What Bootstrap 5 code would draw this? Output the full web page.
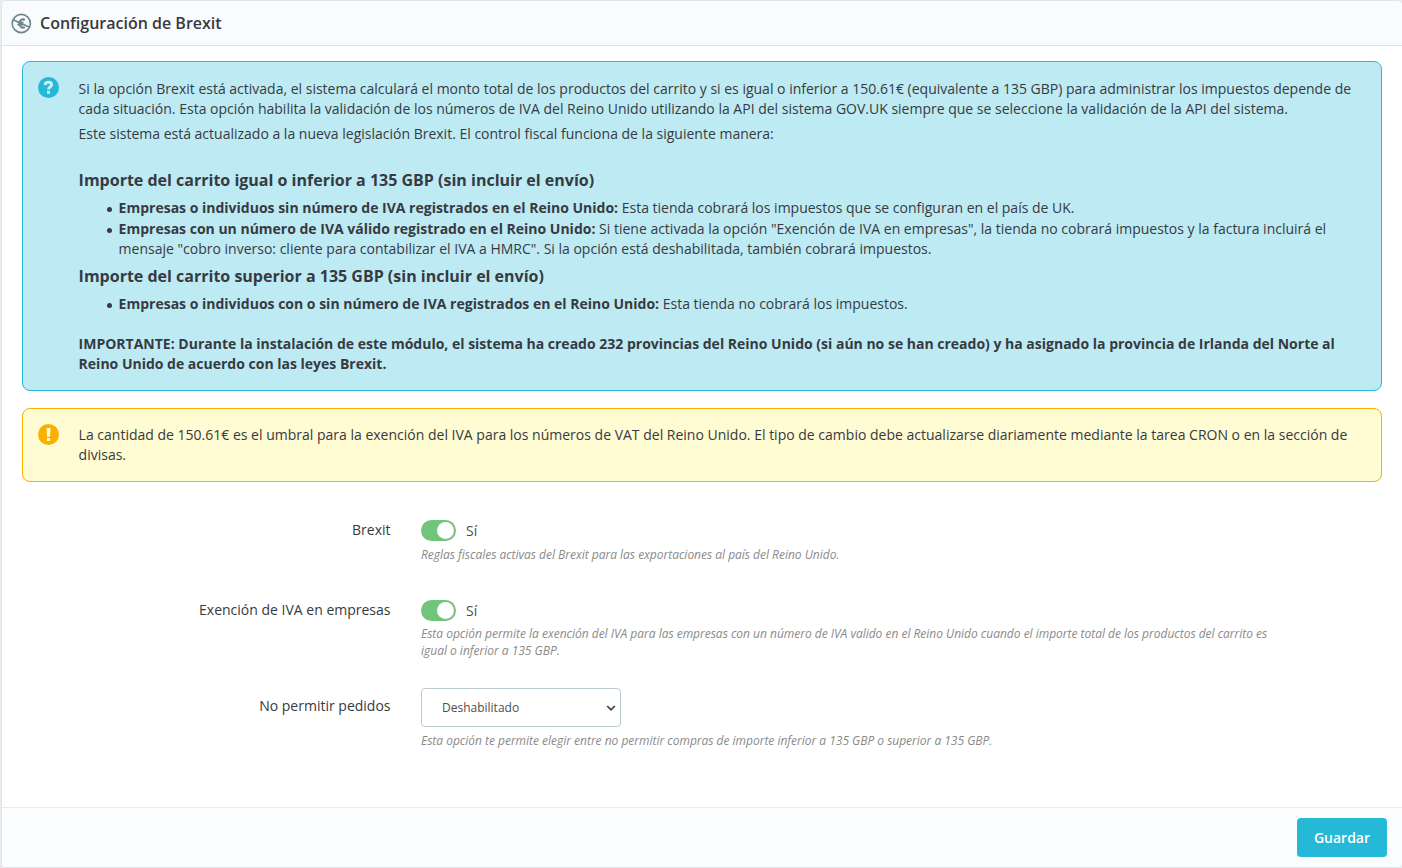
<!DOCTYPE html>
<html lang="es">
<head>
<meta charset="utf-8">
<meta name="viewport" content="width=device-width, initial-scale=1">
<title>Configuración de Brexit</title>
<link href="https://cdn.jsdelivr.net/npm/bootstrap@5.3.0/dist/css/bootstrap.min.css" rel="stylesheet">
<style>
  html, body { height: 100%; }
  body { background: #e9edf0; font-family: "Open Sans", sans-serif; font-size: 14px; line-height: 20px; color: #363a41; overflow: hidden; }
  .panel { height: 868px; margin-left: 1px; border: 1px solid #dbe6e9; border-right: 0; border-radius: 5px; --bs-card-inner-border-radius: 4px; }
  .panel .card-header { height: 45px; padding: 0 9px; background: #fafbfc; border-bottom: 1px solid #dbe6e9; font-size: 16px; font-weight: 600; }
  .panel .card-body { padding: 15px 20px 0; }
  .panel .card-footer { height: 60px; padding: 10px 15px; background: #fcfdfe; border-top: 1px solid #eaebec; }
  .notice { padding: 17px 28px 0 15px; border-radius: 8px; margin: 0; width: 1360px; color: #363a41; }
  .notice svg { margin-top: -2px; margin-right: 19.6px; }
  .notice-info { height: 330px; background: #beeaf3; border-color: #25b9d7; }
  .notice-warn { height: 74px; margin-top: 17px; padding-top: 16px; background: #fffbd3; border-color: #fab000; }
  .notice-warn svg { margin-top: -1px; }
  .notice-warn p { letter-spacing: .003px; }
  .notice p { margin-bottom: 5px; }
  .notice h4 { font-size: 16px; line-height: 22px; font-weight: 700; margin: 0; }
  .notice ul { padding-left: 40px; margin: 7px 0 0; list-style: none; }
  .notice li { position: relative; }
  .notice li + li { margin-top: 1px; }
  .notice li::before { content: ""; position: absolute; left: -12px; top: 9px; width: 5px; height: 5px; border-radius: 50%; background: #363a41; }
  .fields { padding-top: 38px; }
  .field-label { width: 368.5px; text-align: right; margin-right: 30.5px; flex: none; }
  .hint { font-size: 12px; line-height: 17px; font-style: italic; letter-spacing: -.014px; color: #8a8a8a; width: 870px; }
  .toggle { width: 35px; height: 21px; border-radius: 11px; background: #70c47b; padding: 2px; }
  .toggle i { width: 17px; height: 17px; border-radius: 50%; background: #fff; }
  .toggle-text { margin-left: 10px; color: #4e4e4e; }
  .picker { width: 200px; height: 39px; border: 1px solid #bbcdd2; border-radius: 4px; padding: 0 4px 0 20px; font-size: 12px; color: #4e4e4e; background: #fff; }
  .btn-save { width: 90px; height: 39px; background: #25b9d7; color: #fff; font-size: 14px; font-weight: 600; border: 0; border-radius: 4px; padding: 0; }
</style>
</head>
<body>
<div class="card panel">
  <div class="card-header d-flex align-items-center">
    <svg width="21" height="21" viewBox="0 0 21 21" fill="none" stroke="#6c868e"><circle cx="10.3" cy="10.5" r="9.1" stroke-width="1.6"/><path d="M13.8 7C11.2 5.5 8.6 6.9 8.6 10.5S11.2 15.5 13.8 14.1" stroke-width="2.2"/><path d="M6.3 9.5h6.2M6.3 11.7h5.7" stroke-width="1.5"/><path d="M2.3 6.8l16.2 7.4" stroke-width="1.6"/></svg>
    <span class="ms-2">Configuración de Brexit</span>
  </div>
  <div class="card-body">
    <div class="alert notice notice-info d-flex align-items-start">
      <svg class="flex-shrink-0" width="21" height="21" viewBox="0 0 21 21"><circle cx="10.5" cy="10.5" r="10.5" fill="#25b9d7"/><path d="M7 8C7.2 6 8.5 5.3 10.4 5.3S13.6 6.2 13.6 7.8C13.6 9.9 10.5 9.9 10.5 12.6" fill="none" stroke="#d3f1f7" stroke-width="2.9"/><path d="M9 13.9h3v2.9H9z" fill="#d3f1f7"/></svg>
      <div>
        <p>Si la opción Brexit está activada, el sistema calculará el monto total de los productos del carrito y si es igual o inferior a 150.61€ (equivalente a 135 GBP) para administrar los impuestos depende de<br>cada situación. Esta opción habilita la validación de los números de IVA del Reino Unido utilizando la API del sistema GOV.UK siempre que se seleccione la validación de la API del sistema.</p>
        <p>Este sistema está actualizado a la nueva legislación Brexit. El control fiscal funciona de la siguiente manera:</p>
        <h4 style="margin-top:25px">Importe del carrito igual o inferior a 135 GBP (sin incluir el envío)</h4>
        <ul>
          <li><b>Empresas o individuos sin número de IVA registrados en el Reino Unido:</b> Esta tienda cobrará los impuestos que se configuran en el país de UK.</li>
          <li><b>Empresas con un número de IVA válido registrado en el Reino Unido:</b> Si tiene activada la opción "Exención de IVA en empresas", la tienda no cobrará impuestos y la factura incluirá el<br>mensaje "cobro inverso: cliente para contabilizar el IVA a HMRC". Si la opción está deshabilitada, también cobrará impuestos.</li>
        </ul>
        <h4 style="margin-top:6px">Importe del carrito superior a 135 GBP (sin incluir el envío)</h4>
        <ul>
          <li><b>Empresas o individuos con o sin número de IVA registrados en el Reino Unido:</b> Esta tienda no cobrará los impuestos.</li>
        </ul>
        <p class="fw-bold" style="margin-top:20px">IMPORTANTE: Durante la instalación de este módulo, el sistema ha creado 232 provincias del Reino Unido (si aún no se han creado) y ha asignado la provincia de Irlanda del Norte al<br>Reino Unido de acuerdo con las leyes Brexit.</p>
      </div>
    </div>
    <div class="alert notice notice-warn d-flex align-items-start">
      <svg class="flex-shrink-0" width="21" height="21" viewBox="0 0 21 21"><circle cx="10.5" cy="10.5" r="10.5" fill="#fab000"/><path d="M8.5 4h4l-.5 8.8H9zM8.9 14h3.2v3H8.9z" fill="#fffbd3"/></svg>
      <p>La cantidad de 150.61€ es el umbral para la exención del IVA para los números de VAT del Reino Unido. El tipo de cambio debe actualizarse diariamente mediante la tarea CRON o en la sección de<br>divisas.</p>
    </div>
    <div class="fields">
      <div class="d-flex" style="height:80px">
        <label class="field-label">Brexit</label>
        <div>
          <div class="d-flex align-items-center"><span class="toggle d-flex justify-content-end"><i></i></span><span class="toggle-text">Sí</span></div>
          <div class="hint" style="margin-top:5px">Reglas fiscales activas del Brexit para las exportaciones al país del Reino Unido.</div>
        </div>
      </div>
      <div class="d-flex" style="height:88px">
        <label class="field-label">Exención de IVA en empresas</label>
        <div>
          <div class="d-flex align-items-center"><span class="toggle d-flex justify-content-end"><i></i></span><span class="toggle-text">Sí</span></div>
          <div class="hint" style="margin-top:4px">Esta opción permite la exención del IVA para las empresas con un número de IVA valido en el Reino Unido cuando el importe total de los productos del carrito es<br>igual o inferior a 135 GBP.</div>
        </div>
      </div>
      <div class="d-flex">
        <label class="field-label" style="margin-top:8px">No permitir pedidos</label>
        <div>
          <div class="picker d-flex align-items-center justify-content-between"><span>Deshabilitado</span><svg width="10" height="8" viewBox="0 0 10 8"><path d="M1.2 2l3.8 3.9L8.8 2" fill="none" stroke="#3f3f3f" stroke-width="1.7"/></svg></div>
          <div class="hint" style="margin-top:5px">Esta opción te permite elegir entre no permitir compras de importe inferior a 135 GBP o superior a 135 GBP.</div>
        </div>
      </div>
    </div>
  </div>
  <div class="card-footer d-flex justify-content-end"><button class="btn btn-save" type="button">Guardar</button></div>
</div>
<script src="https://cdn.jsdelivr.net/npm/bootstrap@5.3.0/dist/js/bootstrap.bundle.min.js"></script>
</body>
</html>
